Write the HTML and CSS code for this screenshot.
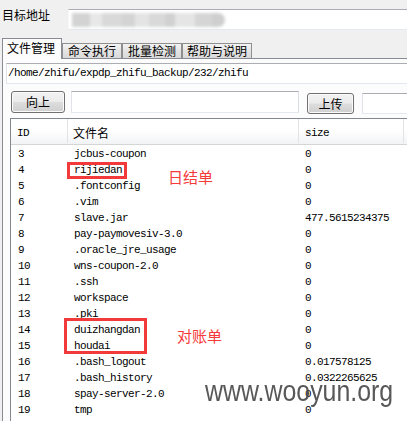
FILE: index.html
```html
<!DOCTYPE html>
<html lang="zh-CN">
<head>
<meta charset="utf-8">
<title>文件管理</title>
<link rel="stylesheet" href="styles.css">
</head>
<body>
<div class="page">
  <div class="top">
    <div class="label">目标地址</div>
    <div class="addr">
      <div class="mosaic">
        <span class="m1"></span><span class="m2"></span><span class="m3"></span><span class="m4"></span><span class="m5"></span><span class="m6"></span><span class="m7"></span><span class="m8"></span><span class="m9"></span><span class="m10"></span>
      </div>
    </div>
  </div>
  <div class="tabs">
    <div class="tab active">文件管理</div>
    <div class="tab">命令执行</div>
    <div class="tab">批量检测</div>
    <div class="tab wide">帮助与说明</div>
  </div>
  <div class="panel">
    <div class="pathbox">/home/zhifu/expdp_zhifu_backup/232/zhifu</div>
    <div class="toolbar">
      <div class="btn btn-up">向上</div>
      <div class="field field-name"></div>
      <div class="btn btn-upload">上传</div>
      <div class="field field-up"></div>
    </div>
    <div class="table">
      <div class="row head">
        <div class="c c1">ID</div>
        <div class="c c2 cjk">文件名</div>
        <div class="c c3">size</div>
        <div class="c c4"></div>
      </div>
      <div class="body">
        <div class="row"><div class="c c1">3</div><div class="c c2">jcbus-coupon</div><div class="c c3">0</div></div>
        <div class="row"><div class="c c1">4</div><div class="c c2">rijiedan</div><div class="c c3">0</div></div>
        <div class="row"><div class="c c1">5</div><div class="c c2">.fontconfig</div><div class="c c3">0</div></div>
        <div class="row"><div class="c c1">6</div><div class="c c2">.vim</div><div class="c c3">0</div></div>
        <div class="row"><div class="c c1">7</div><div class="c c2">slave.jar</div><div class="c c3">477.5615234375</div></div>
        <div class="row"><div class="c c1">8</div><div class="c c2">pay-paymovesiv-3.0</div><div class="c c3">0</div></div>
        <div class="row"><div class="c c1">9</div><div class="c c2">.oracle_jre_usage</div><div class="c c3">0</div></div>
        <div class="row"><div class="c c1">10</div><div class="c c2">wns-coupon-2.0</div><div class="c c3">0</div></div>
        <div class="row"><div class="c c1">11</div><div class="c c2">.ssh</div><div class="c c3">0</div></div>
        <div class="row"><div class="c c1">12</div><div class="c c2">workspace</div><div class="c c3">0</div></div>
        <div class="row"><div class="c c1">13</div><div class="c c2">.pki</div><div class="c c3">0</div></div>
        <div class="row"><div class="c c1">14</div><div class="c c2">duizhangdan</div><div class="c c3">0</div></div>
        <div class="row"><div class="c c1">15</div><div class="c c2">houdai</div><div class="c c3">0</div></div>
        <div class="row"><div class="c c1">16</div><div class="c c2">.bash_logout</div><div class="c c3">0.017578125</div></div>
        <div class="row"><div class="c c1">17</div><div class="c c2">.bash_history</div><div class="c c3">0.0322265625</div></div>
        <div class="row"><div class="c c1">18</div><div class="c c2">spay-server-2.0</div><div class="c c3">0</div></div>
        <div class="row"><div class="c c1">19</div><div class="c c2">tmp</div><div class="c c3">0</div></div>
      </div>
    </div>
  </div>

  <div class="mark mark-1"></div>
  <div class="note note-1">日结单</div>
  <div class="mark mark-2"></div>
  <div class="note note-2">对账单</div>
  <div class="watermark">www.wooyun.org</div>
</div>
</body>
</html>
```
FILE: styles.css
```css
html, body {
  margin: 0;
  padding: 0;
}
body {
  background: #f0f0f0;
  width: 407px;
  height: 421px;
  overflow: hidden;
  font-family: "Noto Sans CJK SC", "Liberation Sans", sans-serif;
  font-size: 12px;
  color: #000;
}
.page {
  position: relative;
  width: 407px;
  height: 421px;
  overflow: hidden;
}

/* top address row */
.top {
  display: flex;
  align-items: flex-start;
  height: 29px;
  padding-top: 9px;
}
.label {
  width: 66px;
  padding-left: 2px;
  margin-top: -1px;
  line-height: 14px;
  font-size: 12px;
  flex: none;
}
.addr {
  flex: 1;
  height: 21px;
  box-sizing: border-box;
  background: #fff;
  border: 1px solid;
  border-color: #abadb3 #dbdfe6 #e3e9ef #f6f6f6;
  margin-right: -4px;
  position: relative;
}
.mosaic {
  display: flex;
  height: 14px;
  margin: 3px 0 0 3px;
  filter: blur(1.6px);
  width: 160px;
}
.mosaic span { display: block; height: 100%; }
.m1 { width: 18px; background: #d3d3d3; }
.m2 { width: 12px; background: #e8e8e8; }
.m3 { width: 20px; background: #d9d9d9; }
.m4 { width: 13px; background: #d4d4d4; }
.m5 { width: 14px; background: #e4e4e4; }
.m6 { width: 16px; background: #d9d9d9; }
.m7 { width: 10px; background: #d1d1d1; }
.m8 { width: 20px; background: #e5e5e5; }
.m9 { width: 17px; background: #d5d5d5; }
.m10 { width: 13px; background: #cfcfcf; border-radius: 0 7px 7px 0; }

/* tabs */
.tabs {
  display: flex;
  align-items: flex-end;
  margin-left: 2px;
  height: 20px;
}
.tab {
  box-sizing: border-box;
  width: 60px;
  height: 15px;
  line-height: 13px;
  text-align: center;
  border: 1px solid #8e8f8f;
  border-bottom: none;
  background: linear-gradient(#f3f3f3, #e4e4e4 50%, #d9d9d9);
  font-size: 12px;
  color: #000;
  flex: none;
}
.tab.wide { width: 70px; }
.tab.active {
  height: 21px;
  line-height: 18px;
  text-align: left;
  padding-left: 4px;
  background: #fcfcfc;
  margin-bottom: -1px;
  position: relative;
  z-index: 1;
  border-color: #898c95;
}

/* panel */
.panel {
  margin-left: 2px;
  border-top: 1px solid #898c95;
  border-left: 1px solid #898c95;
  background: #fcfcfc;
  padding: 4px 0 0 3px;
  height: 400px;
}
.pathbox, .c {
  font-family: "Liberation Mono", "Noto Sans CJK SC", monospace;
  font-size: 11px;
  letter-spacing: -0.6px;
}
.pathbox {
  box-sizing: border-box;
  height: 21px;
  line-height: 19px;
  padding-left: 1px;
  width: 420px;
  background: #fff;
  border: 1px solid;
  border-color: #abadb3 #dbdfe6 #e3e9ef #e2e3ea;
  white-space: nowrap;
}

.toolbar {
  display: flex;
  align-items: flex-start;
  margin-top: 7px;
}
.btn {
  box-sizing: border-box;
  flex: none;
  border: 1px solid #707070;
  border-radius: 3px;
  background: linear-gradient(#f2f2f2 0%, #ebebeb 48%, #dddddd 52%, #cfcfcf 100%);
  box-shadow: inset 0 0 0 1px #fbfbfb;
  text-align: center;
  font-size: 12px;
}
.btn-up {
  width: 54px;
  height: 22px;
  line-height: 19px;
  margin-left: 5px;
}
.btn-upload {
  width: 47px;
  height: 21px;
  line-height: 19px;
  margin-left: 8px;
  margin-top: 2px;
}
.field {
  box-sizing: border-box;
  flex: none;
  background: #fff;
  border: 1px solid;
  border-color: #abadb3 #dbdfe6 #e3e9ef #e2e3ea;
}
.field-name {
  width: 228px;
  height: 22px;
  margin-left: 6px;
}
.field-up {
  width: 60px;
  height: 21px;
  margin-left: 8px;
  margin-top: 2px;
}

/* table */
.table {
  margin-top: 4px;
  margin-left: 4px;
  width: 440px;
  height: 320px;
  background: #fff;
  border: 1px solid #828790;
}
.row {
  display: grid;
  grid-template-columns: 56px 231px 105px 40px;
  height: 16px;
  line-height: 16px;
}
.c {
  white-space: nowrap;
  overflow: hidden;
  box-sizing: border-box;
  border-left: 1px solid transparent;
  padding-left: 6px;
}
.c1 { border-left: none; padding-left: 7px; }
.head {
  height: 25px;
  border-bottom: 1px solid #d5d5d5;
  background: linear-gradient(#ffffff 0%, #ffffff 45%, #f2f3f5 100%);
}
.head .c {
  height: 24px;
  padding-top: 4px;
  line-height: 20px;
  border-left-color: #e2e3e5;
}
.head .c1 { border-left: none; padding-left: 6px; }
.head .cjk {
  font-family: "Noto Sans CJK SC", sans-serif;
  font-size: 12px;
  letter-spacing: 0;
  padding-left: 5px;
}
.body { padding-top: 1px; }

/* annotations */
.mark {
  position: absolute;
  box-sizing: border-box;
  border: 3px solid #f23a3a;
}
.mark-1 { left: 67px; top: 162px; width: 60px; height: 17px; }
.mark-2 { left: 64px; top: 318px; width: 83px; height: 36px; }
.note {
  position: absolute;
  font-family: "Noto Sans CJK SC", sans-serif;
  font-size: 15px;
  line-height: 16px;
  color: #f53a3a;
}
.note-1 { left: 168px; top: 169px; }
.note-2 { left: 177px; top: 328px; }
.watermark {
  position: absolute;
  left: 205px;
  top: 376px;
  font-family: "Liberation Sans", Arial, sans-serif;
  font-size: 30px;
  line-height: 30px;
  color: #4a4a4a;
  opacity: 0.92;
  transform: scaleX(0.83);
  transform-origin: 0 0;
  white-space: nowrap;
}
```
